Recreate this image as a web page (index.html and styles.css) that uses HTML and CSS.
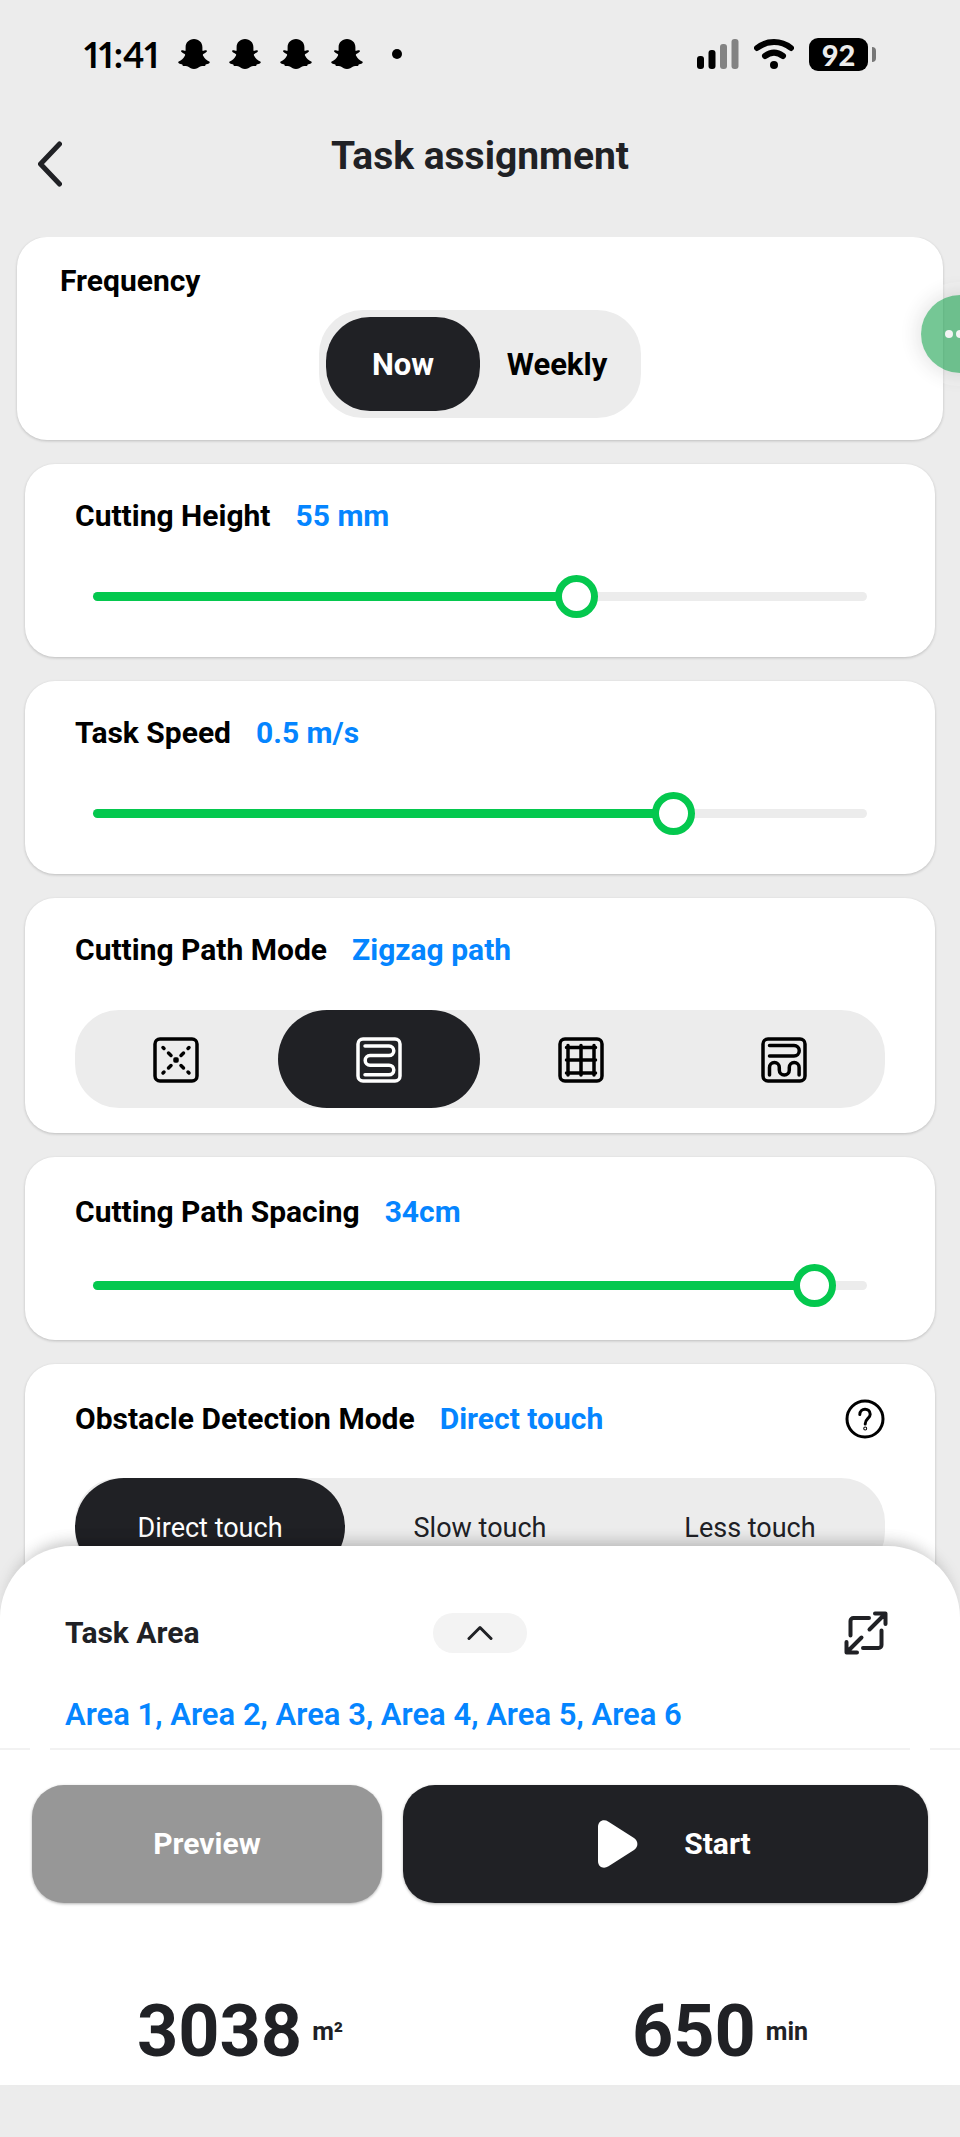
FILE: index.html
```html
<!DOCTYPE html>
<html lang="en">
<head>
    <meta charset="UTF-8">
    <meta name="viewport" content="width=device-width, initial-scale=1.0">
    <title>Task assignment</title>
    <link rel="stylesheet" href="styles.css">
</head>
<body>
    <svg width="0" height="0" class="sprite" aria-hidden="true">
        <symbol id="ghost" viewBox="0 0 32 30">
            <path d="M16 0C11 0 7.6 3.600 7.600 8.300V11.800C6.500 12.200 4.600 10.800 3.400 11.500C2.300 12.300 4 13.800 6.700 14.900C7.400 15.300 7.200 16.200 6.700 17.100C5.500 19.500 3.400 21.800.8 22.500C0 22.800.1 23.700.8 24.200C1.900 24.900 3.200 25 4.100 25.300C4.600 25.700 4.400 26.900 5.300 27.100C6.900 27.300 8.700 26.900 10.300 27.700C12 28.700 13.300 30 16 30S20 28.700 21.700 27.700C23.300 26.900 25.100 27.300 26.700 27.100C27.600 26.900 27.400 25.700 27.900 25.300C28.800 25 30.100 24.900 31.200 24.200C31.900 23.700 32 22.800 31.200 22.500C28.600 21.800 26.500 19.500 25.300 17.100C24.800 16.200 24.600 15.300 25.300 14.900C28 13.800 29.700 12.300 28.600 11.500C27.400 10.800 25.500 12.200 24.400 11.800V8.300C24.400 3.600 21 0 16 0Z" />
        </symbol>
    </svg>

    <div class="app">
        <div class="status-bar">
            <div class="status-left">
                <span class="time">11:41</span>
                <svg width="32" height="30"><use href="#ghost" /></svg>
                <svg width="32" height="30"><use href="#ghost" /></svg>
                <svg width="32" height="30"><use href="#ghost" /></svg>
                <svg width="32" height="30"><use href="#ghost" /></svg>
                <span class="more-dot"></span>
            </div>
            <div class="status-right">
                <svg width="42" height="30" viewBox="0 0 42 30">
                    <rect x="0" y="17" width="7" height="13" rx="3" />
                    <rect x="11.500" y="11" width="7" height="19" rx="3" />
                    <rect x="23" y="5" width="7" height="25" rx="3" fill="#838383" />
                    <rect x="34.500" y="0" width="7" height="30" rx="3" fill="#838383" />
                </svg>
                <svg width="40" height="30" viewBox="0 0 40 30">
                    <g fill="none" stroke="#000" stroke-width="6" stroke-linecap="round">
                        <path d="M3 9C13 1 27 1 37 9" />
                        <path d="M11 17C17 12.500 23 12.500 29 17" />
                    </g>
                    <circle cx="20" cy="26" r="4" />
                </svg>
                <span class="battery">92</span>
            </div>
        </div>

        <header class="header">
            <button class="back" aria-label="Back">
                <svg width="24" height="46" viewBox="0 0 24 46"><path d="M21.500 3L2.500 23L21.500 43" fill="none" stroke="#202125" stroke-width="5" stroke-linecap="round" stroke-linejoin="round" /></svg>
            </button>
            <h1>Task assignment</h1>
        </header>

        <button class="assist" aria-label="More">
            <span></span><span></span><span></span>
        </button>

        <main class="content">
            <section class="card frequency">
                <h2>Frequency</h2>
                <div class="toggle">
                    <button class="active">Now</button>
                    <button>Weekly</button>
                </div>
            </section>

            <section class="card">
                <div class="card-title">
                    <label for="height">Cutting Height</label>
                    <output for="height">55 mm</output>
                </div>
                <div class="slider">
                    <div class="track"><div class="fill" style="width: 62.5%"></div></div>
                    <input type="range" id="height" min="30" max="70" value="55">
                </div>
            </section>

            <section class="card">
                <div class="card-title">
                    <label for="speed">Task Speed</label>
                    <output for="speed">0.5 m/s</output>
                </div>
                <div class="slider">
                    <div class="track"><div class="fill" style="width: 75%"></div></div>
                    <input type="range" id="speed" min="0.2" max="0.6" step="0.1" value="0.5">
                </div>
            </section>

            <section class="card">
                <div class="card-title">
                    <h2>Cutting Path Mode</h2>
                    <span class="value">Zigzag path</span>
                </div>
                <div class="segments">
                    <button aria-label="Edge only">
                        <svg width="46" height="46" viewBox="0 0 46 46">
                            <rect x="2" y="2" width="42" height="42" rx="5" />
                            <path d="M10 10.500L11 11.500M15.500 16L18 18.500M36 10.500L35 11.500M30.500 16L28 18.500M10 36L11 35M15.500 31L18 28.500M36 36L35 35M30.500 31L28 28.500" />
                            <rect x="22" y="22" width="2" height="2" />
                        </svg>
                    </button>
                    <button class="active" aria-label="Zigzag path">
                        <svg width="46" height="46" viewBox="0 0 46 46">
                            <rect x="2" y="2" width="42" height="42" rx="5" />
                            <path d="M9 9H33A4.800 4.800 0 0 1 33 18.600H14A4.800 4.800 0 0 0 14 28.200H33A4.800 4.800 0 0 1 33 37.800H9" />
                        </svg>
                    </button>
                    <button aria-label="Chessboard path">
                        <svg width="46" height="46" viewBox="0 0 46 46">
                            <rect x="2" y="2" width="42" height="42" rx="5" />
                            <path d="M10 8.500V38M23 8.500V38M36 8.500V38M8.500 10.500H37.500M8.500 23H37.500M8.500 36H37.500" />
                        </svg>
                    </button>
                    <button aria-label="Adaptive zigzag path">
                        <svg width="46" height="46" viewBox="0 0 46 46">
                            <rect x="2" y="2" width="42" height="42" rx="5" />
                            <path d="M8.500 8.500H33A5.200 5.200 0 0 1 33 19H8.500M8.500 38V30.500A4.900 4.900 0 0 1 18.300 30.500V33A5 5 0 0 0 28.300 33V30.500A4.900 4.900 0 0 1 38.100 30.500V38" />
                        </svg>
                    </button>
                </div>
            </section>

            <section class="card compact">
                <div class="card-title">
                    <label for="spacing">Cutting Path Spacing</label>
                    <output for="spacing">34cm</output>
                </div>
                <div class="slider">
                    <div class="track"><div class="fill" style="width: 93.3%"></div></div>
                    <input type="range" id="spacing" min="20" max="35" value="34">
                </div>
            </section>

            <section class="card compact">
                <div class="card-title">
                    <h2>Obstacle Detection Mode</h2>
                    <span class="value">Direct touch</span>
                    <button class="help" aria-label="Help">
                        <svg width="40" height="40" viewBox="0 0 40 40" fill="none" stroke="#000" stroke-width="3" stroke-linecap="round" stroke-linejoin="round">
                            <circle cx="20" cy="20" r="18" />
                            <path d="M14.800 15.500C14.800 8.500 25.200 8.500 25.200 15.200C25.200 19.500 20.200 19.500 20.200 25" />
                            <circle cx="20.200" cy="29.500" r=".5" />
                        </svg>
                    </button>
                </div>
                <div class="segments">
                    <button class="active">Direct touch</button>
                    <button>Slow touch</button>
                    <button>Less touch</button>
                </div>
            </section>
        </main>

        <div class="sheet">
            <div class="area">
                <div class="area-head">
                    <h2>Task Area</h2>
                    <button class="expand" aria-label="Expand">
                        <svg width="26" height="16" viewBox="0 0 26 16"><path d="M2 13.500L13 2.500L24 13.500" fill="none" stroke="#202125" stroke-width="3" stroke-linecap="round" stroke-linejoin="round" /></svg>
                    </button>
                    <button class="fullscreen" aria-label="Full screen">
                        <svg width="44" height="44" viewBox="0 0 44 44" fill="none" stroke="#202125" stroke-width="4" stroke-linecap="round" stroke-linejoin="round">
                            <path d="M31 2.500H41.500V13M41 3L25.500 18.500M13 41.500H2.500V31M3 41L17.500 26.500M6.500 24.500V10A3 3 0 0 1 9.500 7H25M19 37H34.500A3 3 0 0 0 37.500 34V19.500" />
                        </svg>
                    </button>
                </div>
                <p class="areas">Area 1, Area 2, Area 3, Area 4, Area 5, Area 6</p>
            </div>
            <div class="divider"></div>
            <div class="actions">
                <button class="preview">Preview</button>
                <button class="start">
                    <svg width="58" height="48" viewBox="0 0 58 48"><path d="M18 7C18 1 23.500-1.500 28.500 1.700L54 18C58.500 21 58.500 27 54 30L28.500 46.300C23.500 49.500 18 47 18 41Z" fill="#fff" /></svg>
                    Start
                </button>
            </div>
            <div class="stats">
                <div class="stat"><strong>3038</strong><span>m²</span></div>
                <div class="stat"><strong>650</strong><span>min</span></div>
            </div>
        </div>
    </div>
</body>
</html>
```
FILE: styles.css
```css
* {
    box-sizing: border-box;
}
body {
    margin: 0;
    background-color: #ececec;
    font-family: Roboto, sans-serif;
    font-size: 30px;
    line-height: 36px;
    color: #000;
}
h1, h2, p {
    margin: 0;
}
h2 {
    font-size: 30px;
    font-weight: 700;
}
button {
    border: none;
    padding: 0;
    background: none;
    font: inherit;
    color: inherit;
    cursor: pointer;
}
svg {
    display: block;
}
.sprite {
    position: absolute;
}
.app {
    position: relative;
    display: flex;
    flex-direction: column;
    height: 100vh;
    padding-bottom: 52px;
    overflow: hidden;
}

/* Status bar */
.status-bar {
    display: flex;
    justify-content: space-between;
    align-items: center;
    flex: none;
    height: 108px;
    padding: 0 84px;
}
.status-left {
    display: flex;
    align-items: center;
    gap: 19px;
}
.time {
    font-family: Lato, sans-serif;
    font-size: 36px;
    font-weight: 700;
    font-variant-numeric: proportional-nums;
}
.more-dot {
    width: 10px;
    height: 10px;
    margin-left: 10px;
    border-radius: 50%;
    background-color: #000;
}
.status-right {
    display: flex;
    align-items: center;
    gap: 15px;
}
.battery {
    position: relative;
    width: 59px;
    height: 33px;
    margin-right: 8px;
    border-radius: 9px;
    background-color: #000;
    color: #ececec;
    font-family: Lato, sans-serif;
    font-size: 29px;
    font-weight: 900;
    line-height: 33px;
    text-align: center;
}
.battery::after {
    content: "";
    position: absolute;
    left: 63px;
    top: 9px;
    width: 4px;
    height: 15px;
    border-radius: 0 4px 4px 0;
    background-color: #777;
}

/* Header */
.header {
    display: grid;
    grid-template-columns: 1fr auto 1fr;
    align-items: start;
    flex: none;
    padding: 24px 38px 50px;
}
.back {
    justify-self: start;
    padding-top: 9px;
}
.header h1 {
    font-size: 39px;
    font-weight: 700;
    line-height: 48px;
    color: #202125;
}

/* Floating button, half off the right edge */
.assist {
    position: absolute;
    top: 295px;
    right: -39px;
    z-index: 1;
    display: flex;
    align-items: center;
    justify-content: center;
    gap: 3px;
    width: 78px;
    height: 78px;
    border-radius: 50%;
    background-color: rgba(25, 162, 78, 0.6);
    box-shadow: 0 0 0 13px rgba(255, 255, 255, 0.2), 0 0 18px 4px rgba(0, 0, 0, 0.12);
}
.assist span {
    width: 8px;
    height: 8px;
    border-radius: 50%;
    background-color: #f4f4f4;
}

/* Cards */
.content {
    flex: 1;
    min-height: 0;
    overflow-y: auto;
    scrollbar-width: none;
    display: flex;
    flex-direction: column;
    gap: 24px;
    padding: 0 25px 70px;
}
.card {
    flex: none;
    padding: 34px 50px 25px;
    border-radius: 30px;
    background-color: #fff;
    box-shadow: 0 1px 3px rgba(0, 0, 0, 0.2);
}
.frequency {
    margin: 0 -8px;
    padding: 26px 43px 22px;
}
.compact {
    padding-top: 37px;
}
.card-title {
    display: flex;
    align-items: center;
    gap: 25px;
    height: 36px;
    font-weight: 700;
}
.card-title output, .value {
    color: #0585ff;
}
.help {
    margin-left: auto;
}
.toggle {
    display: flex;
    width: 322px;
    margin: 11px auto 0;
    padding: 7px;
    border-radius: 44px;
    background-color: #ececec;
    font-size: 31px;
    font-weight: 700;
}
.toggle button {
    flex: 1;
    height: 94px;
    padding-top: 2px;
    border-radius: 44px;
}
.toggle .active, .segments .active {
    background-color: #202125;
    color: #fff;
}
.segments {
    display: flex;
    margin-top: 42px;
    border-radius: 44px;
    background-color: #ececec;
    font-size: 27px;
    color: #202125;
}
.compact .segments {
    margin-top: 41px;
}
.segments button {
    display: flex;
    align-items: center;
    justify-content: center;
    flex: 1;
    height: 98px;
    padding-top: 1px;
    border-radius: 49px;
}
.segments svg {
    fill: none;
    stroke: #000;
    stroke-width: 3.5;
    stroke-linecap: round;
    stroke-linejoin: round;
}
.segments .active svg {
    stroke: #fff;
}

/* Sliders */
.slider {
    display: grid;
    align-items: center;
    margin: 41px 0 14px;
}
.compact .slider {
    margin: 34px 0 8px;
}
.track, .slider input {
    grid-area: 1 / 1;
}
.track {
    height: 9px;
    margin: 0 18px;
    border-radius: 5px;
    background-color: #ececec;
}
.fill {
    height: 100%;
    border-radius: 5px;
    background-color: #04c84e;
}
.slider input {
    appearance: none;
    height: 43px;
    margin: 0 -3px;
    background: none;
}
.slider input::-webkit-slider-thumb {
    appearance: none;
    width: 43px;
    height: 43px;
    border: 7px solid #04c84e;
    border-radius: 50%;
    background-color: #fff;
}

/* Bottom sheet */
.sheet {
    position: relative;
    flex: none;
    margin-top: -70px;
    border-radius: 72px 72px 0 0;
    background-color: #fff;
    box-shadow: 0 -18px 18px -18px rgba(0, 0, 0, 0.2), 0 -8px 16px -4px rgba(0, 0, 0, 0.1);
    color: #202125;
}
.area {
    padding: 65px 65px 15px;
}
.area-head {
    display: grid;
    grid-template-columns: 1fr auto 1fr;
    align-items: center;
}
.expand {
    display: flex;
    align-items: center;
    justify-content: center;
    width: 94px;
    height: 40px;
    border-radius: 20px;
    background-color: #f3f3f3;
}
.fullscreen {
    justify-self: end;
    margin-right: 7px;
}
.areas {
    margin-top: 42px;
    font-size: 31px;
    font-weight: 600;
    color: #0585ff;
}
.divider {
    height: 2px;
    background: linear-gradient(to right, #f2f2f2 30px, #fff 30px, #fff 50px, #f2f2f2 50px, #f2f2f2 calc(100% - 50px), #fff calc(100% - 50px), #fff calc(100% - 30px), #f2f2f2 calc(100% - 30px));
}
.actions {
    display: flex;
    gap: 21px;
    padding: 35px 32px 0;
    font-weight: 700;
    color: #fff;
}
.actions button {
    display: flex;
    align-items: center;
    justify-content: center;
    height: 118px;
    border-radius: 32px;
    box-shadow: 0 1px 3px rgba(0, 0, 0, 0.3);
}
.preview {
    flex: 2;
    background-color: #979797;
}
.start {
    flex: 3;
    gap: 46px;
    background-color: #202125;
}
.stats {
    display: flex;
    padding: 92px 0 16px;
}
.stat {
    display: flex;
    align-items: center;
    justify-content: center;
    flex: 1;
    gap: 10px;
}
.stat strong {
    font-size: 72px;
    font-weight: 700;
    line-height: 74px;
}
.stat span {
    font-size: 25px;
    font-weight: 700;
}
```
